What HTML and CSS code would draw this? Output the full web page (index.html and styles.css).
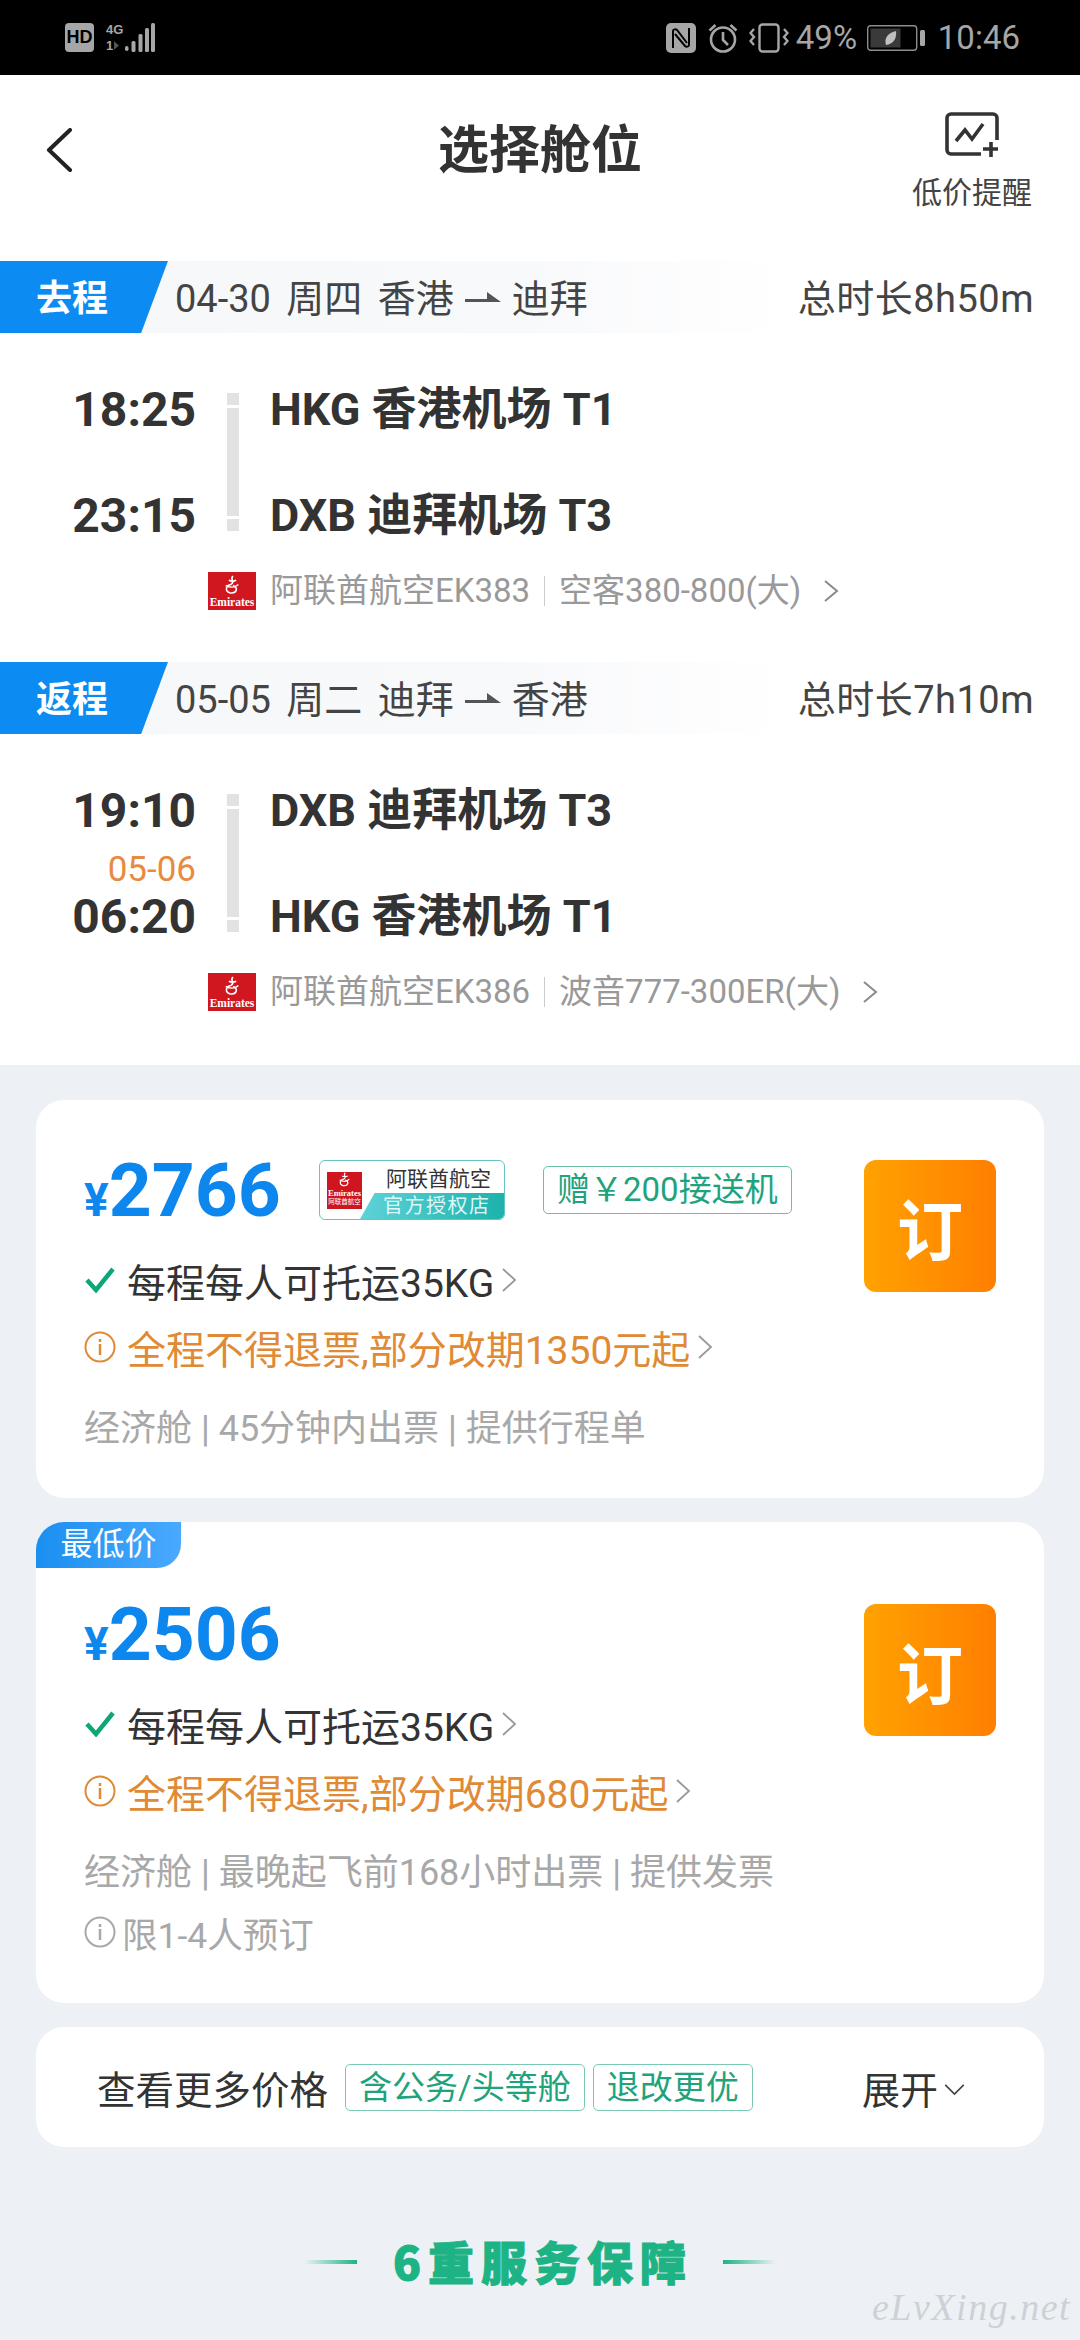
FILE: index.html
```html
<!DOCTYPE html>
<html lang="zh-CN">
<head>
<meta charset="utf-8">
<title>选择舱位</title>
<link rel="stylesheet" href="styles.css">
</head>
<body>
<div class="page">
  <div class="status">
    <div class="status-side">
      <span class="hd">HD</span>
      <div class="net">
        <span class="net-4g">4G</span>
        <span class="net-1">1<svg class="net-arrow" viewBox="0 0 6 10"><path d="M0 0l6 5-6 5z" fill="#555"/></svg></span>
      </div>
      <svg class="bars" viewBox="0 0 30 30"><g fill="#a6a6a6"><rect x="0" y="23" width="3.5" height="5" rx="1.7"/><rect x="6.5" y="18" width="4" height="11" rx="1.5"/><rect x="13.5" y="11" width="4" height="18" rx="1.5"/><rect x="20" y="5" width="4" height="24" rx="1.5"/><rect x="26" y="0" width="4" height="29" rx="1.5"/></g></svg>
    </div>
    <div class="status-side status-right">
      <svg class="st-n" viewBox="0 0 30 30"><path d="M5 0h20a5 5 0 0 1 5 5v20a5 5 0 0 1-5 5H5a5 5 0 0 1-5-5V5a5 5 0 0 1 5-5z" fill="#a6a6a6"/><path d="M7 25V8c0-2 3-2 4-1l10 13M23 5v17c0 2-3 2-4 1L9 11" fill="none" stroke="#000" stroke-width="2"/></svg>
      <svg class="st-alarm" viewBox="0 0 30 30"><g fill="none" stroke="#a6a6a6" stroke-width="2.6"><circle cx="15" cy="16.5" r="12"/><path d="M15 9v8l5 5M1.5 7.5 7.5 2M28.500 7.500 22.500 2"/></g></svg>
      <svg class="st-vib" viewBox="0 0 40 30"><g fill="none" stroke="#a6a6a6" stroke-width="2.4"><rect x="10.500" y="1.500" width="19" height="27" rx="3"/><path d="M5 6 1.500 10 5 14 1.500 18 5 22M35 6l3.500 4L35 14l3.500 4L35 22"/></g></svg>
      <span class="st-pct">49%</span>
      <svg class="st-batt" viewBox="0 0 58 26"><rect x=".7" y=".7" width="49" height="24.600" rx="3" fill="#000" stroke="#8c8c8c" stroke-width="1.400"/><rect x="3.500" y="3.500" width="30" height="19" fill="#3a3a3a"/><path d="M19 20c-2-6 1-12 10-14 1 8-3 13-10 14z" fill="#c0c0c0"/><rect x="53" y="5" width="5" height="16" rx="1.500" fill="#a6a6a6"/></svg>
      <span class="st-time">10:46</span>
    </div>
  </div>

  <header class="topbar">
    <svg class="back" viewBox="0 0 26 44"><path d="M24 2 3 22l21 20" fill="none" stroke="#222" stroke-width="4" stroke-linecap="round" stroke-linejoin="round"/></svg>
    <h1 class="title">选择舱位</h1>
    <div class="alert">
      <svg class="alert-icon" viewBox="0 0 54 46"><path d="M36 42H6a4 4 0 0 1-4-4V6a4 4 0 0 1 4-4h42a4 4 0 0 1 4 4v22" fill="none" stroke="#333" stroke-width="3.600"/><path d="M11 29l9-11 7 9 11-15" fill="none" stroke="#333" stroke-width="3.600"/><path d="M46 30v15M38 37h15" stroke="#333" stroke-width="3.600"/></svg>
      <span class="alert-text">低价提醒</span>
    </div>
  </header>

  <section class="legs">
    <div class="leg">
      <div class="leg-bar">
        <span class="leg-tag">去程</span>
        <span class="leg-route">04-30 周四 香港<svg class="route-arrow" viewBox="0 0 36 16"><path d="M0 7h22V0l14 10H0z" fill="#555"/></svg>迪拜</span>
        <span class="leg-dur">总时长8h50m</span>
      </div>
      <div class="seg seg-first">
        <div class="time">18:25</div>
        <div class="track"><i class="dot"></i><i class="bar"></i><i class="dot"></i></div>
        <div class="place">HKG 香港机场 T1</div>
        <div class="time">23:15</div>
        <div class="place">DXB 迪拜机场 T3</div>
      </div>
      <div class="airline">
        <span class="logo"><svg class="logo-mark" viewBox="0 0 20 20"><path d="M11 1c-4 3 3 5-2 8-5 1-6 6-1 8 7 1 8-5 3-7M4 10c4 2 9 2 12-1M7 5c2 1 5 1 7 0" fill="none" stroke="#fff" stroke-width="1.500"/></svg><span class="logo-name">Emirates</span></span>
        <span class="airline-name">阿联酋航空EK383</span><i class="airline-sep"></i><span class="airline-name">空客380-800(大)</span>
        <svg class="airline-chev" viewBox="0 0 16 24"><path d="M2 2l12 10L2 22" fill="none" stroke="#8a8a8a" stroke-width="2"/></svg>
      </div>
    </div>

    <div class="leg leg-back">
      <div class="leg-bar">
        <span class="leg-tag">返程</span>
        <span class="leg-route">05-05 周二 迪拜<svg class="route-arrow" viewBox="0 0 36 16"><path d="M0 7h22V0l14 10H0z" fill="#555"/></svg>香港</span>
        <span class="leg-dur">总时长7h10m</span>
      </div>
      <div class="seg seg-second">
        <div class="time">19:10</div>
        <div class="track"><i class="dot"></i><i class="bar"></i><i class="dot"></i></div>
        <div class="place">DXB 迪拜机场 T3</div>
        <div class="time time-next"><span class="next-date">05-06</span>06:20</div>
        <div class="place">HKG 香港机场 T1</div>
      </div>
      <div class="airline">
        <span class="logo"><svg class="logo-mark" viewBox="0 0 20 20"><path d="M11 1c-4 3 3 5-2 8-5 1-6 6-1 8 7 1 8-5 3-7M4 10c4 2 9 2 12-1M7 5c2 1 5 1 7 0" fill="none" stroke="#fff" stroke-width="1.500"/></svg><span class="logo-name">Emirates</span></span>
        <span class="airline-name">阿联酋航空EK386</span><i class="airline-sep"></i><span class="airline-name">波音777-300ER(大)</span>
        <svg class="airline-chev" viewBox="0 0 16 24"><path d="M2 2l12 10L2 22" fill="none" stroke="#8a8a8a" stroke-width="2"/></svg>
      </div>
    </div>
  </section>

  <main class="offers">
    <article class="card">
      <div class="card-left">
        <div class="price-row">
          <span class="price"><span class="yen">¥</span>2766</span>
          <div class="auth">
            <span class="auth-logo"><svg class="auth-mark" viewBox="0 0 20 20"><path d="M11 1c-4 3 3 5-2 8-5 1-6 6-1 8 7 1 8-5 3-7M4 10c4 2 9 2 12-1M7 5c2 1 5 1 7 0" fill="none" stroke="#fff" stroke-width="1.500"/></svg><span class="auth-en">Emirates</span><span class="auth-cn">阿联酋航空</span></span>
            <span class="auth-name">阿联酋航空</span>
            <span class="auth-band">官方授权店</span>
          </div>
          <span class="gift">赠￥200接送机</span>
        </div>
        <div class="line line-bag">
          <svg class="ic-check" viewBox="0 0 30 26"><path d="M2 13l9 10L28 2" fill="none" stroke="#0da678" stroke-width="4.500"/></svg>
          <span>每程每人可托运35KG</span>
          <svg class="chev" viewBox="0 0 16 24"><path d="M2 1l12 11L2 23" fill="none" stroke="#999" stroke-width="1.800"/></svg>
        </div>
        <div class="line line-warn">
          <svg class="ic-info" viewBox="0 0 32 32"><circle cx="16" cy="16" r="14.500" fill="none" stroke="currentColor" stroke-width="2"/><path d="M16 13v11M16 8v3" stroke="currentColor" stroke-width="2.500"/></svg>
          <span>全程不得退票,部分改期1350元起</span>
          <svg class="chev" viewBox="0 0 16 24"><path d="M2 1l12 11L2 23" fill="none" stroke="#999" stroke-width="1.800"/></svg>
        </div>
        <div class="line line-meta">经济舱 | 45分钟内出票 | 提供行程单</div>
      </div>
      <button class="book">订</button>
    </article>

    <article class="card card-low">
      <span class="low-tag">最低价</span>
      <div class="card-left">
        <div class="price-row">
          <span class="price"><span class="yen">¥</span>2506</span>
        </div>
        <div class="line line-bag">
          <svg class="ic-check" viewBox="0 0 30 26"><path d="M2 13l9 10L28 2" fill="none" stroke="#0da678" stroke-width="4.500"/></svg>
          <span>每程每人可托运35KG</span>
          <svg class="chev" viewBox="0 0 16 24"><path d="M2 1l12 11L2 23" fill="none" stroke="#999" stroke-width="1.800"/></svg>
        </div>
        <div class="line line-warn">
          <svg class="ic-info" viewBox="0 0 32 32"><circle cx="16" cy="16" r="14.500" fill="none" stroke="currentColor" stroke-width="2"/><path d="M16 13v11M16 8v3" stroke="currentColor" stroke-width="2.500"/></svg>
          <span>全程不得退票,部分改期680元起</span>
          <svg class="chev" viewBox="0 0 16 24"><path d="M2 1l12 11L2 23" fill="none" stroke="#999" stroke-width="1.800"/></svg>
        </div>
        <div class="line line-meta">经济舱 | 最晚起飞前168小时出票 | 提供发票</div>
        <div class="line line-limit">
          <svg class="ic-info" viewBox="0 0 32 32"><circle cx="16" cy="16" r="14.500" fill="none" stroke="currentColor" stroke-width="2"/><path d="M16 13v11M16 8v3" stroke="currentColor" stroke-width="2.500"/></svg>
          <span>限1-4人预订</span>
        </div>
      </div>
      <button class="book">订</button>
    </article>

    <div class="more">
      <span class="more-label">查看更多价格</span>
      <span class="more-tag">含公务/头等舱</span>
      <span class="more-tag">退改更优</span>
      <span class="more-open">展开<svg class="more-chev" viewBox="0 0 22 13"><path d="M1 1l10 10L21 1" fill="none" stroke="#444" stroke-width="1.800"/></svg></span>
    </div>

    <div class="guarantee">
      <i class="g-line g-line-l"></i>
      <span class="g-text">6重服务保障</span>
      <i class="g-line g-line-r"></i>
    </div>
    <span class="watermark">eLvXing.net</span>
  </main>
</div>
</body>
</html>
```
FILE: styles.css
```css
* { box-sizing: border-box; margin: 0; padding: 0; }
html, body { width: 1080px; height: 2340px; overflow: hidden; }
body { font-family: Roboto, "Noto Sans CJK SC", sans-serif; color: #333; background: #edf1f6; }
i { display: block; }
svg { display: block; flex: none; }
.page { width: 1080px; height: 2340px; display: flex; flex-direction: column; position: relative; overflow: hidden; }

/* status bar */
.status { height: 75px; background: #000; color: #a6a6a6; display: flex; justify-content: space-between; align-items: center; padding: 0 60px 0 65px; flex: none; }
.status-side { display: flex; align-items: center; }
.hd { width: 29px; height: 29px; background: #a6a6a6; color: #000; border-radius: 4px; font: 700 18px/29px "Liberation Sans", sans-serif; text-align: center; }
.net { width: 19px; margin-left: 12px; height: 30px; display: flex; flex-direction: column; justify-content: space-between; font: 700 13px/14px "Liberation Sans", sans-serif; }
.net-1 { display: flex; align-items: center; gap: 1px; }
.net-arrow { width: 5px; height: 9px; }
.bars { width: 30px; height: 30px; }
.st-n { width: 30px; height: 30px; }
.st-alarm { width: 30px; height: 30px; margin-left: 12px; }
.st-vib { width: 40px; height: 30px; margin-left: 11px; }
.st-pct { font-size: 33px; line-height: 34px; margin-left: 7px; width: 62px; }
.st-batt { width: 58px; height: 26px; margin-left: 9px; }
.st-time { font-size: 33px; line-height: 34px; margin-left: 13px; }

/* header */
.topbar { height: 186px; background: #fff; position: relative; display: flex; justify-content: center; flex: none; }
.back { width: 26px; height: 44px; position: absolute; left: 46px; top: 53px; }
.title { font-size: 51px; font-weight: 700; line-height: 60px; margin-top: 46px; color: #333; }
.alert { position: absolute; left: 912px; top: 37px; display: flex; flex-direction: column; align-items: center; width: 120px; }
.alert-icon { width: 54px; height: 46px; }
.alert-text { font-size: 30px; line-height: 36px; margin-top: 17px; color: #444; white-space: nowrap; }

/* legs */
.legs { background: #fff; padding-bottom: 54px; flex: none; }
.leg-back { margin-top: 52px; }
.leg-bar { height: 72px; display: flex; align-items: center; background: linear-gradient(90deg, #f5f7f9 0, #f8f9fb 520px, #fff 790px); padding-right: 46px; }
.leg-tag { width: 168px; height: 72px; background: #0c8cf2; color: #fff; font-size: 36px; font-weight: 700; line-height: 76px; padding-left: 36px; clip-path: polygon(0 0, 100% 0, 84% 100%, 0 100%); flex: none; }
.leg-route { font-size: 38px; line-height: 44px; color: #444; margin-left: 7px; padding-top: 4px; display: flex; align-items: center; white-space: pre; word-spacing: 6px; }
.route-arrow { width: 36px; height: 16px; margin: 2px 11px 0; }
.leg-dur { margin-left: auto; font-size: 38px; line-height: 44px; padding-top: 4px; color: #444; white-space: nowrap; letter-spacing: .5px; }

.seg { display: grid; grid-template-columns: 196px 74px 1fr; grid-template-rows: 106px 106px; align-items: center; margin-top: 23px; }
.time { grid-column: 1; font-size: 48px; font-weight: 700; line-height: 56px; padding-top: 2px; text-align: right; color: #333; position: relative; }
.next-date { position: absolute; right: 0; top: -35px; font-size: 35px; font-weight: 400; line-height: 36px; color: #e88a3f; }
.track { grid-column: 2; grid-row: 1 / 3; height: 138px; width: 12px; margin-left: 31px; display: flex; flex-direction: column; gap: 3px; }
.track .dot { width: 12px; height: 12px; background: #e2e2e2; flex: none; }
.track .bar { width: 12px; flex: 1; background: #e2e2e2; }
.place { grid-column: 3; font-size: 45px; font-weight: 700; line-height: 56px; padding-top: 2px; color: #333; white-space: nowrap; }

.airline { height: 38px; margin-top: 4px; padding-left: 208px; display: flex; align-items: center; font-size: 33px; color: #999; }
.logo { width: 48px; height: 38px; background: #d0161f; display: flex; flex-direction: column; align-items: center; justify-content: flex-end; margin-right: 14px; flex: none; padding-bottom: 1px; overflow: hidden; }
.logo-mark { width: 22px; height: 21px; }
.logo-name { font: 700 11.500px/13px "Liberation Serif", serif; color: #fff; white-space: nowrap; }
.airline-name { line-height: 38px; white-space: nowrap; }
.airline-sep { width: 1px; height: 30px; background: #ccc; margin: 0 14px; }
.airline-chev { width: 16px; height: 24px; margin-left: 22px; }

/* offers */
.offers { flex: 1; padding: 35px 36px 0; position: relative; display: flex; flex-direction: column; gap: 24px; }
.card { background: #fff; border-radius: 28px; padding: 60px 48px 46px; display: flex; justify-content: space-between; align-items: flex-start; position: relative; }
.card-low { padding-top: 82px; padding-bottom: 44px; }
.card-left { display: flex; flex-direction: column; }
.price-row { height: 60px; display: flex; align-items: center; margin-left: 1px; }
.price { font-size: 75px; font-weight: 700; line-height: 60px; padding-top: 10px; color: #0d87ee; display: flex; align-items: baseline; width: 234px; flex: none; }
.yen { font-size: 46px; margin-right: 0; margin-left: -1px; }

.auth { width: 186px; height: 60px; border: 1px solid #63c6c4; border-radius: 6px; position: relative; overflow: hidden; background: #fff; flex: none; }
.auth-logo { position: absolute; left: 7px; top: 11px; width: 35px; height: 37px; background: #cf1520; display: flex; flex-direction: column; align-items: center; overflow: hidden; }
.auth-mark { width: 17px; height: 16px; }
.auth-en { font: 700 8.500px/10px "Liberation Serif", serif; color: #fff; white-space: nowrap; }
.auth-cn { font-size: 6.500px; line-height: 9px; color: #fff; white-space: nowrap; }
.auth-name { position: absolute; left: 66px; top: 5px; font-size: 21px; line-height: 26px; color: #333; white-space: nowrap; }
.auth-band { position: absolute; left: 40px; bottom: 0; width: 146px; height: 26px; padding-left: 23px; font-size: 20px; line-height: 26px; letter-spacing: 1.500px; color: #dff7f6; white-space: nowrap; background: linear-gradient(90deg, #5ed2d8, #1cb2ac); clip-path: polygon(10% 0, 100% 0, 100% 100%, 0 100%); }

.gift { height: 48px; margin-left: 38px; border: 1px solid #6cbfa8; border-radius: 5px; padding: 0 13px; font-size: 33px; line-height: 46px; color: #1fa37d; white-space: nowrap; }

.line { height: 50px; display: flex; align-items: center; font-size: 39px; white-space: nowrap; padding-bottom: 4px; }
.line-bag { margin-top: 37px; color: #333; }
.line-warn { margin-top: 17px; color: #e08a35; }
.line-meta { margin-top: 28px; color: #a8a8a8; font-size: 36px; }
.line-limit { margin-top: 13px; color: #a8a8a8; font-size: 35.500px; }
.ic-check { width: 30px; height: 26px; margin-right: 12px; margin-left: 1px; }
.ic-info { width: 32px; height: 32px; margin-right: 11px; }
.line-limit .ic-info { margin-right: 6px; }
.chev { width: 16px; height: 24px; margin-left: 7px; }

.book { width: 132px; height: 132px; border: none; border-radius: 12px; background: linear-gradient(90deg, #ffa200, #ff7f00); color: #fff; font-family: "Noto Sans CJK SC", sans-serif; font-size: 66px; font-weight: 700; flex: none; }
.low-tag { position: absolute; left: 0; top: 0; width: 145px; height: 46px; border-radius: 28px 0 24px 0; background: linear-gradient(90deg, #1a8ff0, #4aa9ff); color: #fff; font-size: 32px; line-height: 44px; text-align: center; }

.more { height: 120px; background: #fff; border-radius: 28px; display: flex; align-items: center; padding: 0 79px 0 61px; flex: none; }
.more-label { font-size: 38.500px; color: #333; white-space: nowrap; margin-right: 17px; }
.more-tag { height: 47px; border: 1px solid #7cc9b3; border-radius: 5px; padding: 0 13px; font-size: 33px; line-height: 45px; color: #1fa37d; white-space: nowrap; margin-right: 8px; }
.more-open { margin-left: auto; font-size: 38px; color: #333; display: flex; align-items: center; white-space: nowrap; }
.more-chev { width: 21px; height: 12px; margin-left: 6px; margin-top: 6px; }

.guarantee { display: flex; align-items: center; justify-content: center; margin-top: 59px; height: 60px; }
.g-text { font-family: "Noto Sans CJK SC", sans-serif; font-size: 46px; font-weight: 900; color: #1db384; letter-spacing: 7px; margin: 0 30px 0 36px; white-space: nowrap; -webkit-text-stroke: 1px #1db384; }
.g-line { width: 53px; height: 4px; margin-top: 3px; }
.g-line-l { background: linear-gradient(90deg, transparent, #1db384); }
.g-line-r { background: linear-gradient(90deg, #1db384, transparent); }
.watermark { position: absolute; left: 872px; top: 1222px; font: italic 38px/40px "Liberation Serif", serif; color: #cdd1d5; letter-spacing: 1.500px; white-space: nowrap; }
```
